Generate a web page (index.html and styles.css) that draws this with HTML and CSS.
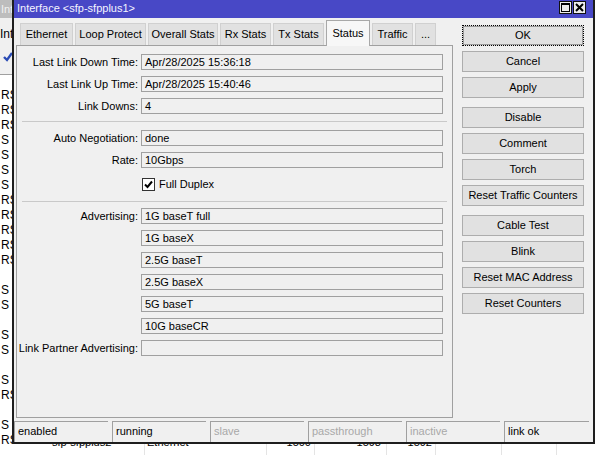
FILE: index.html
```html
<!DOCTYPE html>
<html>
<head>
<meta charset="utf-8">
<title>Interface</title>
<link rel="stylesheet" href="styles.css">
</head>
<body>
<div class="desk">
  <div class="parent">
    <div class="p-title"><span class="clip">Interface List</span></div>
    <div class="p-tabs"><span class="p-tab clip">Interface</span></div>
    <div class="p-toolbar">
      <svg class="p-check" width="10" height="10" viewBox="0 0 10 10"><path d="M1 5 L4 8 L9 1" fill="none" stroke="#2a4bb5" stroke-width="2.4"/></svg>
    </div>
    <div class="p-head"></div>
    <div class="p-list">
      <div class="p-row">RS</div>
      <div class="p-row">RS</div>
      <div class="p-row">RS</div>
      <div class="p-row">S</div>
      <div class="p-row">S</div>
      <div class="p-row">S</div>
      <div class="p-row">S</div>
      <div class="p-row">RS</div>
      <div class="p-row">RS</div>
      <div class="p-row">RS</div>
      <div class="p-row">RS</div>
      <div class="p-row">RS</div>
      <div class="p-row"></div>
      <div class="p-row">S</div>
      <div class="p-row">S</div>
      <div class="p-row"></div>
      <div class="p-row">S</div>
      <div class="p-row">S</div>
      <div class="p-row"></div>
      <div class="p-row">S</div>
      <div class="p-row">RS</div>
      <div class="p-row"></div>
      <div class="p-row">S</div>
      <div class="p-row">RS</div>
    </div>
  </div>
  <div class="bottom">
    <div class="b-row">
      <span class="c c-flag"></span><span class="c c-name">sfp-sfpplus2</span><span class="c c-type">Ethernet</span><span class="c c-num c-mtu">1500</span><span class="c c-num c-l2">1598</span><span class="c c-num c-max">1592</span><span class="c c-a"></span><span class="c c-b"></span><span class="c c-c"></span>
    </div>
  </div>

  <div class="dialog">
    <div class="titlebar">
      <span class="title">Interface &lt;sfp-sfpplus1&gt;</span>
      <span class="tb-btns">
        <span class="tb-btn"><svg width="11" height="11" viewBox="0 0 11 11"><rect x="1.5" y="1.5" width="8" height="8" fill="none" stroke="#000" stroke-width="1"/><line x1="1.5" y1="2.5" x2="9.5" y2="2.5" stroke="#000" stroke-width="1"/></svg></span>
        <span class="tb-btn"><svg width="11" height="11" viewBox="0 0 11 11"><path d="M2 2 L9 9 M9 2 L2 9" stroke="#000" stroke-width="2"/></svg></span>
      </span>
    </div>
    <div class="main">
      <div class="left">
        <div class="tabs">
          <span class="tab">Ethernet</span>
          <span class="tab">Loop Protect</span>
          <span class="tab">Overall Stats</span>
          <span class="tab">Rx Stats</span>
          <span class="tab">Tx Stats</span>
          <span class="tab active">Status</span>
          <span class="tab">Traffic</span>
          <span class="tab">...</span>
        </div>
        <div class="panel">
          <div class="frow"><span class="flabel">Last Link Down Time:</span><div class="field">Apr/28/2025 15:36:18</div></div>
          <div class="frow"><span class="flabel">Last Link Up Time:</span><div class="field">Apr/28/2025 15:40:46</div></div>
          <div class="frow"><span class="flabel">Link Downs:</span><div class="field">4</div></div>
          <div class="sep sep-a"></div>
          <div class="frow"><span class="flabel">Auto Negotiation:</span><div class="field">done</div></div>
          <div class="frow"><span class="flabel">Rate:</span><div class="field">10Gbps</div></div>
          <div class="frow check-row"><span class="flabel"></span>
            <div class="cb-wrap"><span class="cb"><svg width="11" height="11" viewBox="0 0 11 11"><path d="M2 5.5 L4.5 8 L9 2.5" fill="none" stroke="#000" stroke-width="2"/></svg></span><span>Full Duplex</span></div>
          </div>
          <div class="sep sep-b"></div>
          <div class="frow"><span class="flabel">Advertising:</span><div class="field">1G baseT full</div></div>
          <div class="frow"><span class="flabel"></span><div class="field">1G baseX</div></div>
          <div class="frow"><span class="flabel"></span><div class="field">2.5G baseT</div></div>
          <div class="frow"><span class="flabel"></span><div class="field">2.5G baseX</div></div>
          <div class="frow"><span class="flabel"></span><div class="field">5G baseT</div></div>
          <div class="frow"><span class="flabel"></span><div class="field">10G baseCR</div></div>
          <div class="frow"><span class="flabel">Link Partner Advertising:</span><div class="field"></div></div>
        </div>
      </div>
      <div class="buttons">
        <div class="btn focus">OK</div>
        <div class="btn">Cancel</div>
        <div class="btn">Apply</div>
        <div class="btn group">Disable</div>
        <div class="btn">Comment</div>
        <div class="btn">Torch</div>
        <div class="btn">Reset Traffic Counters</div>
        <div class="btn group">Cable Test</div>
        <div class="btn">Blink</div>
        <div class="btn">Reset MAC Address</div>
        <div class="btn">Reset Counters</div>
      </div>
    </div>
    <div class="status">
      <span class="cell">enabled</span>
      <span class="cell">running</span>
      <span class="cell dim">slave</span>
      <span class="cell dim">passthrough</span>
      <span class="cell dim">inactive</span>
      <span class="cell last">link ok</span>
    </div>
  </div>
</div>
</body>
</html>
```

FILE: styles.css
```css
html, body {
  margin: 0;
  padding: 0;
}
body {
  font-family: "Liberation Sans", Arial, sans-serif;
  font-size: 11px;
  color: #000;
}
.desk {
  position: relative;
  width: 595px;
  height: 455px;
  overflow: hidden;
  background: #fff;
}

/* background parent window (only its left strip shows) */
.parent {
  width: 12px;
  height: 444px;
  overflow: hidden;
}
.clip {
  display: block;
  width: 12px;
  overflow: hidden;
  white-space: nowrap;
}
.p-title {
  height: 18px;
  line-height: 18px;
  background: #bdbdbd;
  color: #f2f2f2;
  padding-left: 1px;
  font-size: 11px;
}
.p-tabs {
  height: 26px;
  box-sizing: border-box;
  background: #f0f0f0;
  padding-top: 6px;
}
.p-tab {
  height: 20px;
  line-height: 20px;
  font-size: 12px;
}
.p-toolbar {
  height: 31px;
  box-sizing: border-box;
  background: #f0f0f0;
  border-bottom: 1px solid #a0a0a0;
  padding: 8px 0 0 3px;
}
.p-check {
  display: block;
}
.p-head {
  height: 13px;
  background: #fff;
}
.p-row {
  height: 15px;
  line-height: 15px;
  padding-left: 1px;
  font-size: 12px;
  white-space: nowrap;
}

/* strip of the parent list visible below the dialog */
.bottom {
  height: 11px;
  overflow: hidden;
}
.b-row {
  display: flex;
  margin-top: -9px;
  height: 20px;
}
.c {
  display: block;
  height: 20px;
  box-sizing: border-box;
  border-right: 1px solid #e4e4e4;
  padding-left: 2px;
  line-height: 15px;
  overflow: hidden;
  white-space: nowrap;
}
.c-flag { width: 50px; border-right-color: transparent; }
.c-name { width: 95px; }
.c-type { width: 122px; }
.c-num { text-align: right; padding-right: 3px; }
.c-mtu { width: 48px; }
.c-l2 { width: 72px; padding-right: 5px; }
.c-max { width: 49px; }
.c-a { width: 66px; }
.c-b { width: 55px; }
.c-c { width: 38px; border-right: 0; }

/* dialog window */
.dialog {
  position: absolute;
  left: 12px;
  top: 0;
  width: 583px;
  height: 444px;
  box-sizing: border-box;
  border-left: 2px solid #1e1e1e;
  border-right: 2px solid #1e1e1e;
  border-bottom: 2px solid #1e1e1e;
  background: #f0f0f0;
  display: flex;
  flex-direction: column;
}
.titlebar {
  height: 18px;
  flex: none;
  background: #4848c6;
  display: flex;
  align-items: flex-start;
  justify-content: space-between;
}
.title {
  color: #f4f4ff;
  font-size: 11px;
  line-height: 17px;
  padding-left: 3px;
}
.tb-btns {
  display: flex;
  gap: 1px;
  padding: 1px 7px 0 0;
}
.tb-btn {
  width: 13px;
  height: 13px;
  box-sizing: border-box;
  border: 1px solid #111;
  background: #ececec;
  display: flex;
  align-items: center;
  justify-content: center;
}
.tb-btn svg {
  display: block;
}

.main {
  height: 400px;
  flex: none;
  display: flex;
}
.left {
  width: 437px;
  margin-left: 2px;
  display: flex;
  flex-direction: column;
}
.tabs {
  height: 27px;
  flex: none;
  display: grid;
  grid-template-columns: 53px 71px 70px 51px 51px 44px 41px 21px;
  column-gap: 2px;
  padding-left: 4px;
  align-items: end;
  position: relative;
  z-index: 1;
}
.tab {
  height: 22px;
  box-sizing: border-box;
  border: 1px solid #d0d0d0;
  border-bottom: 0;
  background: #e1e1e1;
  text-align: center;
  line-height: 21px;
  white-space: nowrap;
  overflow: hidden;
}
.tab.active {
  height: 26px;
  margin-bottom: -1px;
  background: #f7f7f7;
  border-color: #a8a8a8;
  line-height: 24px;
}
.panel {
  flex: 1;
  border: 1px solid #a0a0a0;
  background: #f0f0f0;
  padding-top: 8px;
  display: flex;
  flex-direction: column;
}
.frow {
  display: grid;
  grid-template-columns: 121px 302px;
  column-gap: 3px;
  height: 16px;
  margin-bottom: 6px;
  align-items: center;
}
.flabel {
  text-align: right;
  white-space: nowrap;
}
.field {
  height: 16px;
  box-sizing: border-box;
  border: 1px solid #a0a0a0;
  padding: 0 3px;
  line-height: 14px;
  white-space: nowrap;
}
.sep {
  height: 1px;
  background: #c9c9c9;
  margin: 1px 5px 8px 5px;
}
.sep-b {
  margin-bottom: 6px;
}
.check-row {
  height: 20px;
}
.cb-wrap {
  display: flex;
  align-items: center;
  gap: 4px;
  padding-left: 1px;
}
.cb {
  width: 13px;
  height: 13px;
  box-sizing: border-box;
  border: 1px solid #333;
  background: #fff;
  display: flex;
  align-items: center;
  justify-content: center;
}
.cb svg {
  display: block;
}

.buttons {
  width: 122px;
  margin-left: 9px;
  padding-top: 7px;
  display: flex;
  flex-direction: column;
}
.btn {
  height: 21px;
  box-sizing: border-box;
  border: 1px solid #adadad;
  background: #e1e1e1;
  text-align: center;
  line-height: 19px;
  margin-bottom: 5px;
  white-space: nowrap;
}
.btn.group {
  margin-top: 4px;
}
.btn.focus {
  border: 1px dotted #000;
  box-shadow: inset 0 0 0 1px #9a9a9a;
}

.status {
  height: 24px;
  flex: none;
  box-sizing: border-box;
  padding-top: 3px;
  display: flex;
  gap: 4px;
}
.cell {
  width: 94px;
  height: 21px;
  box-sizing: border-box;
  border-top: 1px solid #a0a0a0;
  border-left: 1px solid #a0a0a0;
  padding-left: 3px;
  line-height: 19px;
  white-space: nowrap;
}
.cell.dim {
  color: #a8a8a8;
}
.cell.last {
  width: 85px;
}
```
